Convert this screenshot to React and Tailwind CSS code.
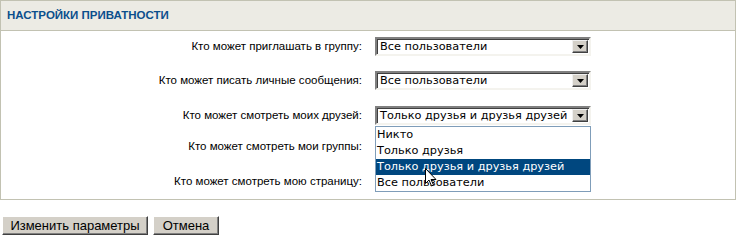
import React from 'react';

const rows = [
  { label: 'Кто может приглашать в группу:', value: 'Все пользователи', gap: 'mt-[6px]' },
  { label: 'Кто может писать личные сообщения:', value: 'Все пользователи', gap: 'mt-[15px]' },
  { label: 'Кто может смотреть моих друзей:', value: 'Только друзья и друзья друзей', gap: 'mt-[16px]' },
  { label: 'Кто может смотреть мои группы:', value: 'Все пользователи', gap: 'mt-[12px]' },
  { label: 'Кто может смотреть мою страницу:', value: 'Все пользователи', gap: 'mt-[16px]' },
];

const options = ['Никто', 'Только друзья', 'Только друзья и друзья друзей', 'Все пользователи'];

const ArrowButton = () => (
  <div className="w-[16px] h-full bg-[#d4d0c8] border border-t-[#f0f0f0] border-l-[#f0f0f0] border-r-[#404040] border-b-[#404040] shadow-[inset_-1px_-1px_#808080] flex items-center justify-center">
    <svg width="7" height="4" viewBox="0 0 7 4">
      <path d="M0 0h7L3.5 4z" fill="#000" />
    </svg>
  </div>
);

const FakeSelect = ({ value }) => (
  <div className="w-[216px] h-[19px] flex border-2 border-t-[#808080] border-l-[#808080] border-r-[#f4f3ee] border-b-[#f4f3ee] shadow-[inset_1px_1px_#404040] bg-white">
    <div className="flex-1 pl-[3px] pt-[1px] text-[11.3px] leading-[14px] font-['DejaVu_Sans',sans-serif] text-black whitespace-nowrap overflow-hidden">
      {value}
    </div>
    <div className="py-[1px] pr-[1px]">
      <ArrowButton />
    </div>
  </div>
);

const Cursor = () => (
  <svg className="absolute left-[425px] top-[168px]" width="12" height="19" viewBox="0 0 12 19">
    <path d="M0.5 0.5v15l3.5-3.5 2.5 6 2-1-2.5-5.5h5z" fill="#fff" stroke="#000" strokeWidth="1" />
  </svg>
);

export default function App() {
  return (
    <div className="relative w-[737px] h-[238px] bg-white font-['Liberation_Sans',Arial,sans-serif]">
      <div className="w-[736px] border border-[#c2c2b2]">
        <div className="h-[30px] bg-[#ecebe4] border-b border-[#c2c2b2] flex items-center pl-[6px]">
          <span className="text-[11.5px] font-bold text-[#0b4f8c]">НАСТРОЙКИ ПРИВАТНОСТИ</span>
        </div>
        <div className="flex flex-col pb-[8px]">
          {rows.map((r, i) => (
            <div key={i} className={`flex items-center h-[19px] ${r.gap}`}>
              <div className="w-[361px] text-right text-[11.5px] text-black whitespace-nowrap">{r.label}</div>
              <div className="ml-[13px]">
                <FakeSelect value={r.value} />
              </div>
            </div>
          ))}
        </div>
      </div>

      <div className="flex gap-[5px] mt-[16px] pl-[2px]">
        <button className="h-[19px] w-[146px] bg-[#d4d0c8] border border-t-white border-l-white border-r-[#404040] border-b-[#404040] shadow-[inset_-1px_-1px_#808080] text-[13px] leading-[15px] text-black">
          Изменить параметры
        </button>
        <button className="h-[19px] w-[66px] bg-[#d4d0c8] border border-t-white border-l-white border-r-[#404040] border-b-[#404040] shadow-[inset_-1px_-1px_#808080] text-[13px] leading-[15px] text-black">
          Отмена
        </button>
      </div>

      <div className="absolute left-[375px] top-[126px] w-[216px] bg-white border border-[#7f9db9] font-['DejaVu_Sans',sans-serif] text-[11.3px] leading-[16px]">
        {options.map((o, i) => (
          <div
            key={i}
            className={i === 2 ? 'bg-[#00477f] text-white pl-[1px] whitespace-nowrap' : 'text-black pl-[1px] whitespace-nowrap'}
          >
            {o}
          </div>
        ))}
      </div>

      <Cursor />
    </div>
  );
}
